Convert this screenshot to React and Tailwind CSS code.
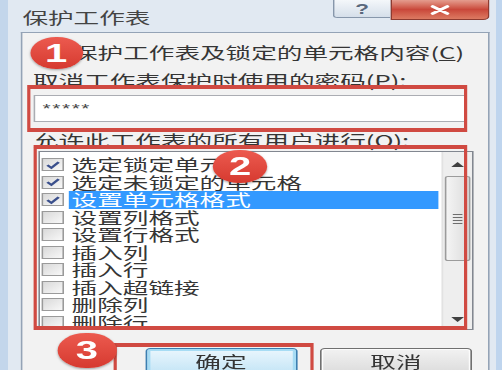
import { useState } from "react";

const items = [
  { label: "选定锁定单元格", checked: true },
  { label: "选定未锁定的单元格", checked: true },
  { label: "设置单元格格式", checked: true, selected: true },
  { label: "设置列格式", checked: false },
  { label: "设置行格式", checked: false },
  { label: "插入列", checked: false },
  { label: "插入行", checked: false },
  { label: "插入超链接", checked: false },
  { label: "删除列", checked: false },
  { label: "删除行", checked: false },
];

function Box({ checked }) {
  return (
    <span className="flex h-[13px] w-[14px] shrink-0 items-center justify-center border border-[#9a9a9a] bg-linear-to-br from-[#d9d9d9] to-[#f8f8f8]">
      {checked && (
        <svg viewBox="0 0 10 10" className="h-[10px] w-[10px]">
          <path d="M1.6 5.2 L4.1 7.9 L8.7 2.1" fill="none" stroke="#3a4f8c" strokeWidth="1.8" />
        </svg>
      )}
    </span>
  );
}

function Badge({ n, className }) {
  return (
    <div
      className={
        "absolute flex items-center justify-center rounded-full bg-linear-to-b from-[#ec5a4f] to-[#d6392f] shadow-[0_1px_2px_rgba(0,0,0,0.35)] font-['Liberation_Sans',sans-serif] text-[25px] font-bold leading-none text-white " +
        className
      }
    >
      {n}
    </div>
  );
}

export default function App() {
  const [list, setList] = useState(items);

  const toggle = (i) => {
    setList(list.map((it, j) => (j === i ? { ...it, checked: !it.checked } : it)));
  };

  return (
    <div className="h-[370px] w-[502px] overflow-hidden bg-[#dde7f2] font-['Noto_Sans_CJK_SC','Liberation_Sans',sans-serif] text-[16px] text-[#353535]">
      <div className="relative flex h-[370px] w-[313.75px] origin-top-left scale-x-[1.6] flex-col bg-[#e1e9f2] pl-[13px] pr-[8px] shadow-[inset_5px_0_0_#c3d6eb,inset_-4px_0_0_#bfd5ee]">
        {/* title bar */}
        <div className="flex h-[32px] shrink-0 items-start">
          <span className="ml-[1px] mt-[8px] leading-[18px] text-[#444]">保护工作表</span>
          <div className="ml-auto flex">
            <div className="flex h-[18px] w-[36px] items-center justify-center rounded-bl-[3px] border border-t-0 border-r-0 border-[#8797ab] bg-linear-to-b from-[#f4f7fa] to-[#d5dfea] font-['Liberation_Sans',sans-serif] text-[14px] font-bold leading-none text-[#5a687c]">
              ?
            </div>
            <div className="flex h-[20px] w-[62px] items-center justify-center rounded-br-[4px] border border-t-0 border-[#8e3b30] bg-linear-to-b from-[#e49c8e] via-[#c9473a] to-[#dc7a62]">
              <svg viewBox="0 0 14 10" className="h-[10px] w-[14px]">
                <path d="M2.5 1.5 L11.5 8.5 M11.5 1.5 L2.5 8.5" stroke="#fff" strokeWidth="2.6" strokeLinecap="round" />
              </svg>
            </div>
          </div>
        </div>

        {/* client area */}
        <div className="flex flex-1 flex-col border border-b-0 border-[#94a3b6] bg-[#f2f2f2]">
          <label className="ml-[8px] mt-[10px] flex h-[18px] items-center gap-[9px] leading-[18px]">
            <Box checked />
            <span>
              保护工作表及锁定的单元格内容(<span className="underline">C</span>)
            </span>
          </label>

          <div className="ml-[6.6px] mt-[10px] h-[18px] leading-[18px]">
            取消工作表保护时使用的密码(<span className="underline">P</span>):
          </div>

          <div className="ml-[6.6px] mt-[6px] flex h-[27px] w-[270px] items-center border border-[#abadb3] bg-white pl-[5px] font-['Liberation_Sans',sans-serif] text-[13px] tracking-[1px] text-[#444]">
            *****
          </div>

          <div className="ml-[6.6px] mt-[9px] h-[18px] leading-[18px]">
            允许此工作表的所有用户进行(<span className="underline">O</span>):
          </div>

          {/* list box */}
          <div className="ml-[9.75px] mt-[2px] flex h-[179px] w-[272px] border border-[#828790] bg-white">
            <div className="flex flex-1 flex-col overflow-hidden pt-[4px]">
              {list.map((it, i) => (
                <div
                  key={it.label}
                  onClick={() => toggle(i)}
                  className="flex h-[17.5px] shrink-0 items-center pl-[1.5px]"
                >
                  <Box checked={it.checked} />
                  <span
                    className={
                      "ml-[3px] mr-[2px] flex-1 pl-[1.5px] leading-[17.5px] " +
                      (it.selected ? "bg-[#3399ff] text-white" : "")
                    }
                  >
                    {it.label}
                  </span>
                </div>
              ))}
            </div>

            {/* scrollbar */}
            <div className="flex w-[19px] flex-col border-l border-[#e2e2e2] bg-[#eeeeee]">
              <div className="flex h-[24px] items-center justify-center">
                <svg viewBox="0 0 8 5" className="h-[5px] w-[8px]">
                  <path d="M0 5 L4 0 L8 5 Z" fill="#404040" />
                </svg>
              </div>
              <div className="mx-[1px] flex h-[85px] items-center justify-center rounded-[2px] border border-[#9b9b9b] bg-linear-to-r from-[#f4f4f4] to-[#dcdcdc]">
                <div className="flex flex-col gap-[2px]">
                  <div className="h-px w-[6px] bg-[#6e6e6e]" />
                  <div className="h-px w-[6px] bg-[#6e6e6e]" />
                  <div className="h-px w-[6px] bg-[#6e6e6e]" />
                  <div className="h-px w-[6px] bg-[#6e6e6e]" />
                </div>
              </div>
              <div className="flex-1" />
              <div className="flex h-[20px] items-center justify-center">
                <svg viewBox="0 0 8 5" className="h-[5px] w-[8px]">
                  <path d="M0 0 L8 0 L4 5 Z" fill="#404040" />
                </svg>
              </div>
            </div>
          </div>

          {/* buttons */}
          <div className="ml-[76.6px] mt-[18px] flex gap-[14.4px]">
            <button className="flex h-[26px] w-[95px] items-start justify-center rounded-[3px] border border-[#3c7fb1] bg-linear-to-b from-[#eaf6fd] to-[#c4e5f6] pt-[3px] leading-[18px] shadow-[inset_0_0_0_2px_#a7dcf4] text-[#353535]">
              确定
            </button>
            <button className="flex h-[26px] w-[95px] items-start justify-center rounded-[3px] border border-[#707070] bg-linear-to-b from-[#f2f2f2] to-[#dcdcdc] pt-[3px] leading-[18px] shadow-[inset_0_0_0_1px_#fcfcfc] text-[#353535]">
              取消
            </button>
          </div>
        </div>

        {/* annotations */}
        <div className="pointer-events-none absolute left-[16.9px] top-[85px] h-[47px] w-[275.6px] border-x-[2.5px] border-y-[4px] border-[#d04a42]" />
        <div className="pointer-events-none absolute left-[20.6px] top-[145px] h-[185px] w-[271.4px] border-x-[2.5px] border-y-[4px] border-[#d04a42]" />
        <div className="pointer-events-none absolute left-[70.6px] top-[343px] h-[40px] w-[125.4px] border-x-[2.5px] border-y-[4px] border-[#d04a42]" />
        <Badge n="1" className="left-[18.5px] top-[37px] h-[32px] w-[33px]" />
        <Badge n="2" className="left-[133px] top-[150px] h-[33px] w-[34px]" />
        <Badge n="3" className="left-[35.6px] top-[333px] h-[35px] w-[37.5px]" />
      </div>
    </div>
  );
}
